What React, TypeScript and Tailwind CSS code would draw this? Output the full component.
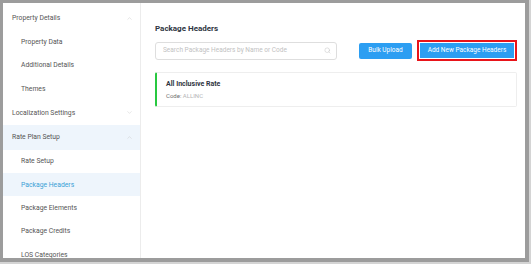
import { ChevronDown, ChevronUp, Search } from "lucide-react"

type NavItem = { label: string; kind: "section" | "child"; open?: boolean; active?: boolean }

const items: NavItem[] = [
  { label: "Property Details", kind: "section", open: true },
  { label: "Property Data", kind: "child" },
  { label: "Additional Details", kind: "child" },
  { label: "Themes", kind: "child" },
  { label: "Localization Settings", kind: "section", open: false },
  { label: "Rate Plan Setup", kind: "section", open: true, active: true },
  { label: "Rate Setup", kind: "child" },
  { label: "Package Headers", kind: "child", active: true },
  { label: "Package Elements", kind: "child" },
  { label: "Package Credits", kind: "child" },
  { label: "LOS Categories", kind: "child" },
]

function SidebarRow({ item }: { item: NavItem }) {
  if (item.kind === "section") {
    return (
      <div
        className={`flex h-[24.5px] items-center justify-between pl-[9px] pr-[7px] text-[6.8px] text-[#555] ${
          item.active ? "bg-[#eef5fc]" : ""
        }`}
      >
        <span>{item.label}</span>
        {item.open ? (
          <ChevronUp size={7} strokeWidth={1.3} className="text-[#c0c0c0]" />
        ) : (
          <ChevronDown size={7} strokeWidth={1.3} className="text-[#c0c0c0]" />
        )}
      </div>
    )
  }
  return (
    <div
      className={`flex h-[23.4px] items-center pl-[18px] text-[6.8px] ${
        item.active ? "bg-[#eef5fc] text-[#3aa0d6]" : "text-[#555]"
      }`}
    >
      {item.label}
    </div>
  )
}

export default function App() {
  return (
    <div className="h-[264px] w-[531px] bg-[#d4d4d4] font-['Roboto',sans-serif]">
      <div className="flex h-[262px] w-[529px] border-t-[3px] border-l-[3px] border-r-[4px] border-b-[4px] border-[#9c9c9c] bg-white">
        <aside className="w-[138px] shrink-0 overflow-hidden border-r border-[#ececec] pt-[3px]">
          {items.map((item) => (
            <SidebarRow key={item.label} item={item} />
          ))}
        </aside>

        <main className="flex-1 pl-[14px] pr-[5px] pt-[21px]">
          <h1 className="text-[8px] leading-[10px] font-bold text-[#2f3542]">Package Headers</h1>

          <div className="mt-[6px] flex items-center">
            <div className="flex h-[18px] w-[182px] items-center justify-between rounded-[3px] border border-[#dedede] pl-[7px] pr-[5px]">
              <span className="text-[6.5px] text-[#c2c2c2]">Search Package Headers by Name or Code</span>
              <Search size={7} strokeWidth={1.5} className="text-[#bdbdbd]" />
            </div>

            <button
              type="button"
              className="ml-[22px] flex h-[16px] w-[53px] items-center justify-center rounded-[2px] bg-[#2c9ef2] text-[6.5px] leading-none text-white"
            >
              Bulk Upload
            </button>

            <div className="ml-[5px] flex border-2 border-[#e8141a] p-px">
              <button
                type="button"
                className="flex h-[15px] w-[94px] items-center justify-center bg-[#2c9ef2] text-[6.5px] leading-none text-white"
              >
                Add New Package Headers
              </button>
            </div>
          </div>

          <div className="mt-[11px] flex h-[35px] w-[362px] flex-col justify-center gap-[4px] rounded-[2px] border border-[#eeeeee] border-l-2 border-l-[#28c840] pl-[9px]">
            <div className="text-[7px] leading-[8px] font-bold text-[#2f3542]">All Inclusive Rate</div>
            <div className="text-[6px] leading-[7px] text-[#707070]">
              Code: <span className="text-[#b5b5b5]">ALLINC</span>
            </div>
          </div>
        </main>
      </div>
    </div>
  )
}
